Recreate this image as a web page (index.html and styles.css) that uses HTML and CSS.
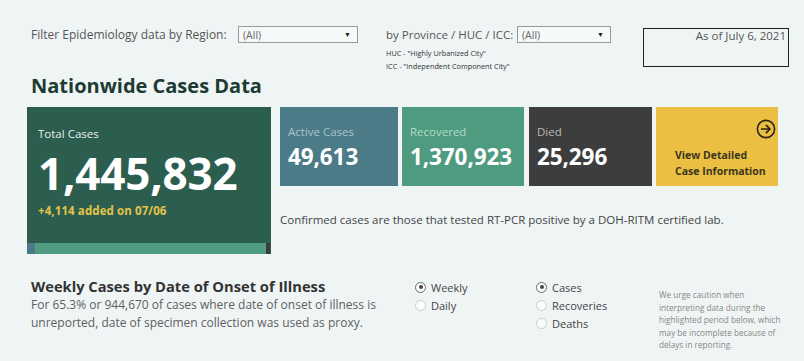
FILE: index.html
```html
<!DOCTYPE html>
<html>
<head>
<meta charset="utf-8">
<link rel="stylesheet" href="styles.css">
</head>
<body>
<div class="page">
  <header class="filters">
    <div class="filter region">
      <span class="flabel">Filter Epidemiology data by Region:</span>
      <div class="select s1"><span>(All)</span><span class="caret">&#9660;</span></div>
    </div>
    <div class="filter prov">
      <div class="frow">
        <span class="flabel">by Province / HUC / ICC:</span>
        <div class="select s2"><span>(All)</span><span class="caret">&#9660;</span></div>
      </div>
      <div class="notes">
        <div>HUC - "Highly Urbanized City"</div>
        <div>ICC - "Independent Component City"</div>
      </div>
    </div>
    <div class="asof">As of July 6, 2021</div>
  </header>

  <h1 class="title">Nationwide Cases Data</h1>

  <section class="cases">
    <div class="total">
      <div class="total-body">
        <div class="tlabel">Total Cases</div>
        <div class="tnum">1,445,832</div>
        <div class="tadd">+4,114 added on 07/06</div>
      </div>
      <div class="tbar">
        <span class="seg-a"></span><span class="seg-r"></span><span class="seg-d"></span>
      </div>
    </div>
    <div class="right">
      <div class="cards">
        <div class="card active"><div class="clabel">Active Cases</div><div class="cnum">49,613</div></div>
        <div class="card recovered"><div class="clabel">Recovered</div><div class="cnum">1,370,923</div></div>
        <div class="card died"><div class="clabel">Died</div><div class="cnum">25,296</div></div>
        <div class="card view">
          <svg class="arrow" width="20" height="20" viewBox="0 0 20 20"><circle cx="10" cy="10" r="8.6" fill="none" stroke="#2b2614" stroke-width="1.6"/><path d="M5.6 10h8.2M10.4 6.4l3.6 3.6-3.6 3.6" fill="none" stroke="#2b2614" stroke-width="1.7" stroke-linecap="round" stroke-linejoin="round"/></svg>
          <div class="vtext">View Detailed<br>Case Information</div>
        </div>
      </div>
      <p class="confirmed">Confirmed cases are those that tested RT-PCR positive by a DOH-RITM certified lab.</p>
    </div>
  </section>

  <section class="weekly">
    <div class="wtext">
      <h2>Weekly Cases by Date of Onset of Illness</h2>
      <p>For 65.3% or 944,670 of cases where date of onset of illness is<br>unreported, date of specimen collection was used as proxy.</p>
    </div>
    <div class="radios r1">
      <div class="radio on"><span class="dot"></span>Weekly</div>
      <div class="radio"><span class="dot"></span>Daily</div>
    </div>
    <div class="radios r2">
      <div class="radio on"><span class="dot"></span>Cases</div>
      <div class="radio"><span class="dot"></span>Recoveries</div>
      <div class="radio"><span class="dot"></span>Deaths</div>
    </div>
    <div class="caution">We urge caution when<br>interpreting data during the<br>highlighted period below, which<br>may be incomplete because of<br>delays in reporting.</div>
  </section>
</div>
</body>
</html>
```

FILE: styles.css
```css
* { box-sizing: border-box; }
html, body { margin: 0; padding: 0; }
body {
  background: #eff5f5;
  font-family: "Open Sans", "Liberation Sans", sans-serif;
  color: #555;
  width: 804px;
  height: 361px;
  overflow: hidden;
}
.page { padding: 26px 0 0 0; }

.filters {
  display: flex;
  align-items: flex-start;
  height: 45px;
  padding-left: 31px;
}
.filter { display: flex; align-items: center; }
.flabel { font-size: 11.5px; color: #555; white-space: nowrap; }
.region .flabel { width: 207px; font-size: 12px; }
.select {
  display: flex;
  justify-content: space-between;
  align-items: center;
  height: 17px;
  border: 1px solid #9a9a9a;
  background: #f6f9f9;
  padding: 0 6px 0 4px;
  font-size: 10.5px;
  color: #666;
}
.s1 { width: 120px; }
.s2 { width: 94px; }
.caret { font-size: 7px; color: #222; }
.prov { flex-direction: column; align-items: flex-start; margin-left: 28px; }
.frow { display: flex; align-items: center; }
.prov .flabel { width: 131px; }
.notes { font-size: 7.3px; color: #333; line-height: 13px; margin-top: 4px; }
.asof {
  margin-left: 32px;
  margin-top: 2px;
  width: 146px;
  height: 39px;
  border: 1px solid #222;
  text-align: right;
  font-size: 11.5px;
  line-height: 14px;
  color: #555;
  padding: 0 2px 0 0;
}

.title {
  margin: 2px 0 0 31px;
  font-size: 20px;
  font-weight: 700;
  color: #1d3b33;
  line-height: 26px;
}

.cases {
  display: flex;
  margin-top: 8px;
  padding-left: 27px;
}
.total {
  width: 244px;
  height: 147px;
  background: #2c5e4f;
  display: flex;
  flex-direction: column;
}
.total-body { flex: 1; padding: 19px 0 0 11px; }
.tlabel { font-size: 11.5px; color: #e6efec; line-height: 16px; }
.tnum {
  font-size: 44px;
  font-weight: 700;
  color: #fff;
  line-height: 44px;
  margin-top: 9px;
  letter-spacing: -0.2px;
}
.tadd { font-size: 11.5px; line-height: 14px; font-weight: 700; color: #e2c448; margin-top: 9px; letter-spacing: 0.1px; }
.tbar { display: flex; height: 11px; padding-right: 1px; }
.seg-a { width: 8px; background: #4b7a86; }
.seg-r { flex: 1; background: #4f9c81; }
.seg-d { width: 4px; background: #3d3d3d; }

.right { margin-left: 9px; }
.cards { display: flex; gap: 4px; }
.card {
  width: 122px;
  height: 79px;
  padding: 18px 0 0 8px;
}
.card.active { width: 118px; background: #4b7b87; }
.card.recovered { background: #4e9b80; }
.card.died { width: 123px; background: #3d3d3d; margin-left: 1px; }
.card.view { background: #ebbf41; position: relative; padding: 0 0 0 19px; display: flex; align-items: flex-end; }
.clabel { font-size: 11.5px; line-height: 14px; color: #a9c4c8; }
.recovered .clabel { color: #b4dccb; }
.died .clabel { color: #b8b8b8; }
.cnum { font-size: 22.5px; font-weight: 700; color: #fff; line-height: 36px; letter-spacing: -0.1px; }
.arrow { position: absolute; right: 2px; top: 12px; }
.vtext {
  font-size: 10.5px;
  font-weight: 700;
  color: #3b3520;
  line-height: 16px;
  padding-bottom: 7px;
}
.confirmed {
  margin: 26px 0 0 0;
  font-size: 11.5px;
  color: #444;
}

.weekly {
  display: flex;
  margin-top: 20px;
  padding-left: 31px;
}
.wtext { width: 384px; padding-top: 2px; }
.wtext h2 {
  margin: 0;
  font-size: 14.7px;
  font-weight: 700;
  color: #333;
  line-height: 20px;
}
.wtext p {
  margin: 0;
  font-size: 12px;
  color: #606060;
  line-height: 18px;
}
.radios { font-size: 11px; color: #444; padding-top: 4px; }
.r1 { width: 121px; }
.r2 { width: 123px; }
.radio { display: flex; align-items: center; height: 18px; }
.dot {
  width: 11px; height: 11px;
  border-radius: 50%;
  border: 1px solid #c9cfcf;
  background: #fbfcfc;
  margin-right: 5px;
  position: relative;
}
.radio.on .dot { border-color: #6a6a6a; }
.radio.on .dot::after {
  content: "";
  position: absolute;
  left: 2.5px; top: 2.5px;
  width: 4px; height: 4px;
  border-radius: 50%;
  background: #444;
}
.caution {
  margin-top: 15px;
  font-size: 8.2px;
  line-height: 12.5px;
  color: #888;
  white-space: nowrap;
}
```
